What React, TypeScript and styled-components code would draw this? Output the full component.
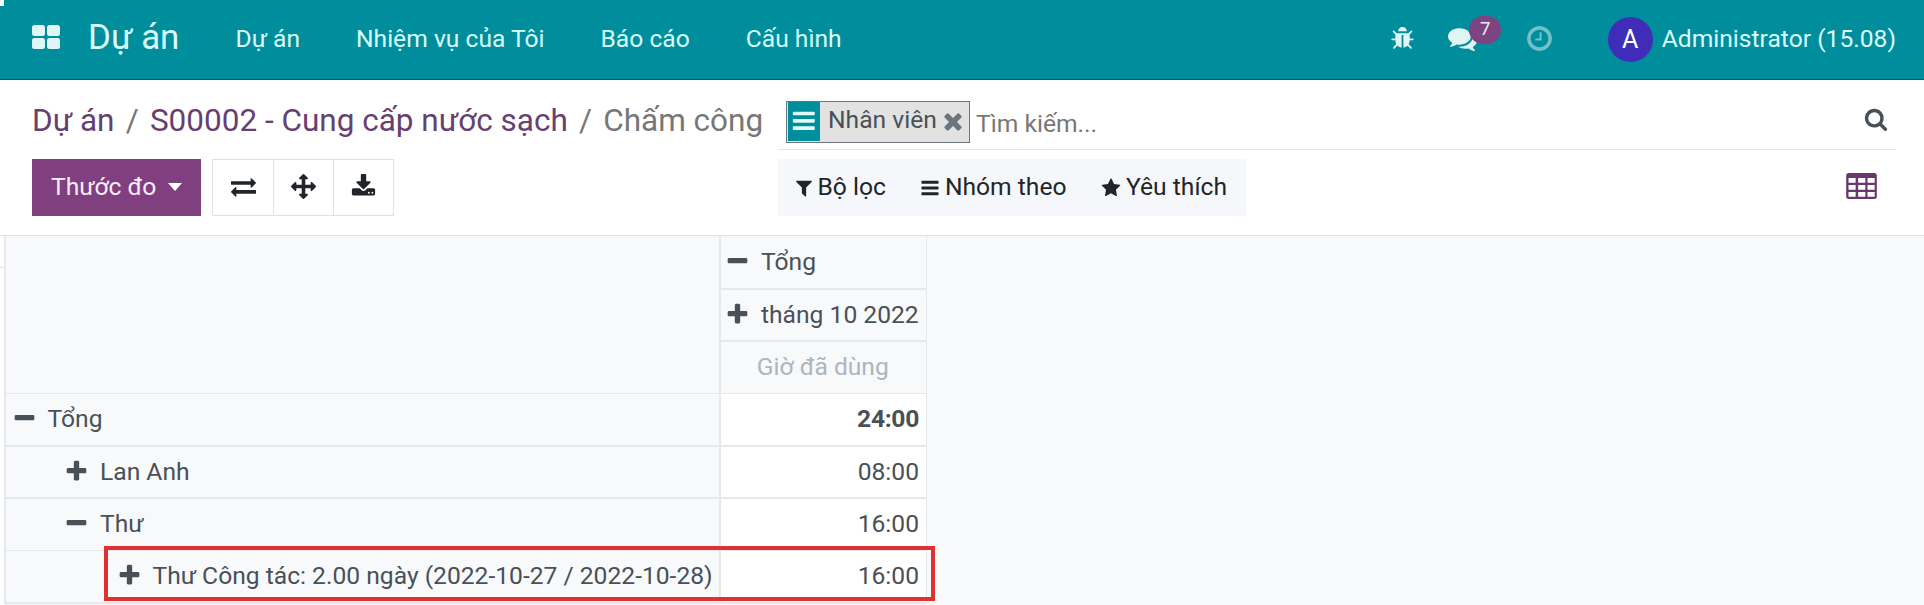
import React from "react";
import styled, { createGlobalStyle } from "styled-components";

const Global = createGlobalStyle`
  * { box-sizing: border-box; }
  body { margin: 0; background: #fff; font-family: Roboto, "Noto Sans", sans-serif; font-size: 24.63px; color: #495057; overflow: hidden; }
  button { font: inherit; color: inherit; border: 0; background: none; padding: 0; margin: 0; }
`;

const paths = {
  plus: "M1600 736v192q0 40-28 68t-68 28h-416v416q0 40-28 68t-68 28h-192q-40 0-68-28t-28-68v-416h-416q-40 0-68-28t-28-68v-192q0-40 28-68t68-28h416v-416q0-40 28-68t68-28h192q40 0 68 28t28 68v416h416q40 0 68 28t28 68z",
  minus: "M1600 736v192q0 40-28 68t-68 28h-1216q-40 0-68-28t-28-68v-192q0-40 28-68t68-28h1216q40 0 68 28t28 68z",
  search: "M1216 832q0-185-131.5-316.5t-316.5-131.5-316.5 131.5-131.5 316.5 131.5 316.5 316.5 131.5 316.5-131.5 131.5-316.5zm512 832q0 52-38 90t-90 38q-54 0-90-38l-343-342q-179 124-399 124-143 0-273.5-55.5t-225-150-150-225-55.5-273.5 55.5-273.5 150-225 225-150 273.5-55.5 273.5 55.5 225 150 150 225 55.5 273.5q0 220-124 399l343 343q37 37 37 90z",
  clock: "M1024 544v448q0 14-9 23t-23 9h-320q-14 0-23-9t-9-23v-64q0-14 9-23t23-9h224v-352q0-14 9-23t23-9h64q14 0 23 9t9 23zm416 352q0-148-73-273t-198-198-273-73-273 73-198 198-73 273 73 273 198 198 273 73 273-73 198-198 73-273zm224 0q0 209-103 385.5t-279.5 279.5-385.5 103-385.5-103-279.5-279.5-103-385.5 103-385.5 279.5-279.5 385.5-103 385.5 103 279.5 279.5 103 385.5z",
  comments: "M1408 768q0 139-94 257t-256.5 186.5-353.5 68.5q-86 0-176-16-124 88-278 128-36 9-86 16h-3q-11 0-20.5-8t-11.5-21q-1-3-1-6.5t.5-6.5 2-6l2.5-5 3.5-5.5 4-5 4.5-5 4-4.5q5-6 23-25t26-29.5 22.5-29 25-38.5 20.5-44q-124-72-195-177t-71-224q0-139 94-257t256.5-186.5 353.5-68.5 353.5 68.5 256.5 186.5 94 257zm384 256q0 120-71 224.5t-195 176.5q10 24 20.5 44t25 38.5 22.5 29 26 29.5 23 25q1 1 4 4.5t4.5 5 4 5 3.5 5.5l2.5 5 2 6 .5 6.5-1 6.5q-3 14-13 22t-22 7q-50-7-86-16-154-40-278-128-90 16-176 16-271 0-472-132 58 4 88 4 161 0 309-45t264-129q125-92 192-212t67-254q0-77-23-152 129 71 204 178t75 230z",
  bug: "M1696 960q0 26-19 45t-45 19h-224q0 171-67 290l208 209q19 19 19 45t-19 45q-18 19-45 19t-45-19l-198-197q-5 5-15 13t-42 28.5-65 36.5-82 29-97 13v-896h-128v896q-51 0-101.5-13.5t-87-33-66-39-43.5-32.5l-15-14-183 207q-20 21-48 21-24 0-43-16-19-18-20.5-44.5t15.5-46.5l202-227q-58-114-58-274h-224q-26 0-45-19t-19-45 19-45 45-19h224v-294l-173-173q-19-19-19-45t19-45 45-19 45 19l173 173h844l173-173q19-19 45-19t45 19 19 45-19 45l-173 173v294h224q26 0 45 19t19 45zm-480-576h-640q0-133 93.5-226.5t226.5-93.5 226.5 93.5 93.5 226.5z",
  times: "M1490 1322q0 40-28 68l-136 136q-28 28-68 28t-68-28l-294-294-294 294q-28 28-68 28t-68-28l-136-136q-28-28-28-68t28-68l294-294-294-294q-28-28-28-68t28-68l136-136q28-28 68-28t68 28l294 294 294-294q28-28 68-28t68 28l136 136q28 28 28 68t-28 68l-294 294 294 294q28 28 28 68z",
  filter: "M1595 295q17 41-14 70l-493 493v742q0 42-39 59-13 5-25 5-27 0-45-19l-256-256q-19-19-19-45v-486l-493-493q-31-29-14-70 17-39 59-39h1280q42 0 59 39z",
  star: "M1728 647q0 22-26 48l-363 354 86 500q1 7 1 20 0 21-10.5 35.5t-30.5 14.5q-19 0-40-12l-449-236-449 236q-22 12-40 12-21 0-31.5-14.5t-10.5-35.5q0-6 2-20l86-500-364-354q-25-27-25-48 0-37 56-46l502-73 225-455q19-41 49-41t49 41l225 455 502 73q56 9 56 46z",
  bars: "M1664 1344v128q0 26-19 45t-45 19h-1408q-26 0-45-19t-19-45v-128q0-26 19-45t45-19h1408q26 0 45 19t19 45zm0-512v128q0 26-19 45t-45 19h-1408q-26 0-45-19t-19-45v-128q0-26 19-45t45-19h1408q26 0 45 19t19 45zm0-512v128q0 26-19 45t-45 19h-1408q-26 0-45-19t-19-45v-128q0-26 19-45t45-19h1408q26 0 45 19t19 45z",
  arrows: "M1792 896q0 26-19 45l-256 256q-19 19-45 19t-45-19-19-45v-128h-384v384h128q26 0 45 19t19 45-19 45l-256 256q-19 19-45 19t-45-19l-256-256q-19-19-19-45t19-45 45-19h128v-384h-384v128q0 26-19 45t-45 19-45-19l-256-256q-19-19-19-45t19-45l256-256q19-19 45-19t45 19 19 45v128h384v-384h-128q-26 0-45-19t-19-45 19-45l256-256q19-19 45-19t45 19l256 256q19 19 19 45t-19 45-45 19h-128v384h384v-128q0-26 19-45t45-19 45 19l256 256q19 19 19 45z",
  exchange: "M1792 1184v192q0 13-9.5 22.5t-22.5 9.5h-1376v192q0 13-9.5 22.5t-22.5 9.5q-12 0-24-10l-319-320q-9-9-9-22 0-14 9-23l320-320q9-9 23-9 13 0 22.5 9.5t9.5 22.5v192h1376q13 0 22.5 9.5t9.5 22.5zm0-544q0 14-9 23l-320 320q-9 9-23 9-13 0-22.5-9.5t-9.5-22.5v-192h-1376q-13 0-22.5-9.5t-9.5-22.5v-192q0-13 9.5-22.5t22.5-9.5h1376v-192q0-14 9-23t23-9q12 0 24 10l319 319q9 9 9 23z",
  download: "M1344 1344q0-26-19-45t-45-19-45 19-19 45 19 45 45 19 45-19 19-45zm256 0q0-26-19-45t-45-19-45 19-19 45 19 45 45 19 45-19 19-45zm128-224v320q0 40-28 68t-68 28h-1472q-40 0-68-28t-28-68v-320q0-40 28-68t68-28h465l135 136q58 56 136 56t136-56l136-136h464q40 0 68 28t28 68zm-325-569q17 41-14 70l-448 448q-18 19-45 19t-45-19l-448-448q-31-29-14-70 17-39 59-39h256v-448q0-26 19-45t45-19h256q26 0 45 19t19 45v448h256q42 0 59 39z",
};

const Svg = styled.svg<{ $s: number }>`
  width: ${(p) => p.$s}px;
  height: ${(p) => p.$s}px;
  flex: none;
  fill: currentColor;
  display: block;
`;
const Icon = ({ name, size = 25 }: { name: keyof typeof paths; size?: number }) => (
  <Svg $s={size} viewBox="0 0 1792 1792"><path d={paths[name]} /></Svg>
);

const TableSvg = styled.svg`width: 31px; height: 26px; display: block; color: #66396a;`;
const TableIcon = () => (
  <TableSvg viewBox="0 0 92 78">
    <rect width="92" height="78" rx="8" fill="currentColor" />
    {[15, 36, 57].map((y) =>
      [7, 36, 64].map((x) => <rect key={`${x}-${y}`} x={x} y={y} width="21.5" height="14.5" rx="1.5" fill="#fff" />)
    )}
  </TableSvg>
);

const Page = styled.div`height: 605px; display: flex; flex-direction: column; overflow: hidden;`;

const Navbar = styled.header`
  position: relative; height: 80px; flex: none; display: flex; align-items: center;
  background: #008d9c; border-bottom: 1px solid #0a5a66; color: #d9fdfc;
  padding: 0 28px 2px 32px;
  &::before { content: ""; position: absolute; left: 0; top: 0; width: 4px; height: 6px; background: #fff; }
`;
const AppsGrid = styled.div`
  display: grid; grid-template-columns: 13px 13px; grid-auto-rows: 11px; gap: 2px; margin: 0 28px 3px 0;
  i { background: #e0f6f6; border-radius: 2.5px; }
`;
const Brand = styled.div`font-size: 34.9px; line-height: 40px; width: 147.5px; padding-bottom: 1px;`;
const Menu = styled.nav`display: flex; gap: 56px;`;
const Systray = styled.div`margin-left: auto; display: flex; align-items: center; color: #e0f6f6;`;
const Tray = styled.div<{ $w: number; $faded?: boolean }>`
  position: relative; width: ${(p) => p.$w}px; opacity: ${(p) => (p.$faded ? 0.5 : 1)};
`;
const Badge = styled.span`
  position: absolute; left: 21.5px; top: -8px; width: 32px; height: 28px; border-radius: 14px;
  background: #7c4480; color: #f4e8f4; font-size: 18.5px; line-height: 27px; text-align: center;
`;
const Avatar = styled.div`
  width: 45px; height: 45px; border-radius: 50%; background: #3f2cb8; color: #fff;
  font-size: 25px; line-height: 45px; text-align: center; margin: 2px 9px 0 0;
`;
const UserName = styled.span`color: #d9fdfc;`;

const ControlPanel = styled.section`
  flex: none; height: 156px; border-bottom: 1px solid #dee2e6; display: grid;
  grid-template-columns: 746px 1fr; grid-template-rows: 70px 1fr; padding: 0 28px 0 32px;
`;
const Crumbs = styled.div`
  display: flex; align-items: center; gap: 11.2px; font-size: 31.5px; color: #777; padding-top: 11px; white-space: nowrap;
  a { color: #66406f; }
`;
const Search = styled.div`
  display: flex; align-items: flex-start; border-bottom: 1px solid #e4e6e9; padding: 21px 8px 0; color: #777;
`;
const Facet = styled.div`
  display: flex; align-items: flex-start; width: 184px; height: 42px; border: 1px solid #6c757d; background: #e1e2e1;
  color: #495057; padding-left: 1px; margin-right: 6px; line-height: 36px;
`;
const FacetIcon = styled.span`
  width: 32px; height: 39px; background: #008d9c; color: #e0fbfb; display: grid; place-items: center; margin-right: 8px;
  padding-bottom: 2px;
`;
const FacetRemove = styled.button`margin: 5.5px 0 0 3px; color: #6c757d;`;
const SearchText = styled.span`line-height: 45px; flex: 1;`;
const SearchButton = styled.button`margin-top: 6px; color: #495057;`;
const Actions = styled.div`display: flex; align-items: flex-start; padding-top: 9px;`;
const Measures = styled.button`
  width: 169px; height: 57px; background: #80407f; color: #fbeefb; display: flex; align-items: center;
  padding: 0 0 2px 19px; margin-right: 11px;
`;
const Caret = styled.i`border: 7.5px solid transparent; border-top: 8px solid #fff; border-bottom: 0; margin-left: 12px;`;
const ToolGroup = styled.div`display: flex; height: 57px; border: 1px solid #dee2e6; color: #212529;`;
const Tool = styled.button`
  width: 60px; display: grid; place-items: center; padding-bottom: 2px;
  & + & { border-left: 1px solid #dee2e6; }
`;
const Filters = styled.div`display: flex; align-items: flex-start; justify-content: space-between; padding: 9px 19px 0 0;`;
const FilterBar = styled.div`
  display: flex; align-items: center; height: 57px; width: 468px; background: #f5f7fb; color: #212529;
  padding: 0 0 2px 16px; gap: 34.5px;
`;
const Filter = styled.span<{ $gap: number }>`
  display: flex; align-items: center; gap: ${(p) => p.$gap}px; white-space: nowrap;
  svg { margin-top: 2px; }
`;
const ViewSwitch = styled.div`margin-top: 14px;`;

const Content = styled.main`flex: 1; display: flex; align-items: stretch;`;
const Gutter = styled.div`width: 4px; height: 32px; border-bottom: 1px solid #dee2e6;`;
const Sheet = styled.div`flex: 1; background: #f8f9fb; display: flex; align-items: flex-start; position: relative;`;
const Pivot = styled.div`
  display: grid; grid-template-columns: 715px 206px; grid-template-rows: 54px 52px 52px 53px 52px 52px 53px;
  border-left: 2px solid #e6e8eb;
`;
const Cell = styled.div<{ $indent?: number; $value?: boolean; $bold?: boolean; $thin?: boolean }>`
  display: flex; align-items: center; gap: 11px; white-space: nowrap;
  border-right: 2px solid #e6e9ec;
  border-bottom: ${(p) => (p.$thin ? 1 : 2)}px solid #e6e9ec;
  padding: 0 7px ${(p) => (p.$thin ? 3 : 2)}px ${(p) => 5.5 + (p.$indent ?? 0) * 52.5}px;
  ${(p) => p.$value && "background: #fff; justify-content: flex-end;"}
  ${(p) => p.$bold && "font-weight: 700; letter-spacing: -0.3px;"}
`;
const Corner = styled(Cell)`grid-row: span 3;`;
const EndCell = styled(Cell)`border-right-width: 1px;`;
const ColumnHead = styled(EndCell)`padding-left: 4px;`;
const MeasureName = styled(EndCell)`justify-content: center; color: #adb5bd;`;
const Highlight = styled.div`
  position: absolute; left: 100px; top: 310px; width: 831px; height: 55px; border: 4px solid #e03131;
`;

const rows = [
  { label: "Tổng", value: "24:00", indent: 0, open: true },
  { label: "Lan Anh", value: "08:00", indent: 1, open: false },
  { label: "Thư", value: "16:00", indent: 1, open: true, last: true },
  { label: "Thư Công tác: 2.00 ngày (2022-10-27 / 2022-10-28)", value: "16:00", indent: 2, open: false },
];

export default function App() {
  return (
    <Page>
      <Global />
      <Navbar>
        <AppsGrid><i /><i /><i /><i /></AppsGrid>
        <Brand>Dự án</Brand>
        <Menu><span>Dự án</span><span>Nhiệm vụ của Tôi</span><span>Báo cáo</span><span>Cấu hình</span></Menu>
        <Systray>
          <Tray $w={58}><Icon name="bug" size={25} /></Tray>
          <Tray $w={77}><Icon name="comments" size={29} /><Badge>7</Badge></Tray>
          <Tray $w={83} $faded><Icon name="clock" size={29} /></Tray>
          <Avatar>A</Avatar>
          <UserName>Administrator (15.08)</UserName>
        </Systray>
      </Navbar>
      <ControlPanel>
        <Crumbs><a>Dự án</a><span>/</span><a>S00002 - Cung cấp nước sạch</a><span>/</span><span>Chấm công</span></Crumbs>
        <Search>
          <Facet>
            <FacetIcon><Icon name="bars" size={25.6} /></FacetIcon>
            Nhân viên
            <FacetRemove><Icon name="times" size={26} /></FacetRemove>
          </Facet>
          <SearchText>Tìm kiếm...</SearchText>
          <SearchButton><Icon name="search" size={24} /></SearchButton>
        </Search>
        <Actions>
          <Measures>Thước đo<Caret /></Measures>
          <ToolGroup>
            <Tool><Icon name="exchange" /></Tool>
            <Tool><Icon name="arrows" /></Tool>
            <Tool><Icon name="download" /></Tool>
          </ToolGroup>
        </Actions>
        <Filters>
          <FilterBar>
            <Filter $gap={3.5}><Icon name="filter" size={20} />Bộ lọc</Filter>
            <Filter $gap={4.5}><Icon name="bars" size={20} />Nhóm theo</Filter>
            <Filter $gap={5}><Icon name="star" size={20} />Yêu thích</Filter>
          </FilterBar>
          <ViewSwitch><TableIcon /></ViewSwitch>
        </Filters>
      </ControlPanel>
      <Content>
        <Gutter />
        <Sheet>
          <Pivot>
            <Corner $thin />
            <ColumnHead><Icon name="minus" />Tổng</ColumnHead>
            <ColumnHead><Icon name="plus" />tháng 10 2022</ColumnHead>
            <MeasureName $thin>Giờ đã dùng</MeasureName>
            {rows.map((r) => (
              <React.Fragment key={r.label}>
                <Cell $indent={r.indent} $thin={r.last}><Icon name={r.open ? "minus" : "plus"} />{r.label}</Cell>
                <EndCell $value $bold={r.indent === 0} $thin={r.last}>{r.value}</EndCell>
              </React.Fragment>
            ))}
          </Pivot>
          <Highlight />
        </Sheet>
      </Content>
    </Page>
  );
}
